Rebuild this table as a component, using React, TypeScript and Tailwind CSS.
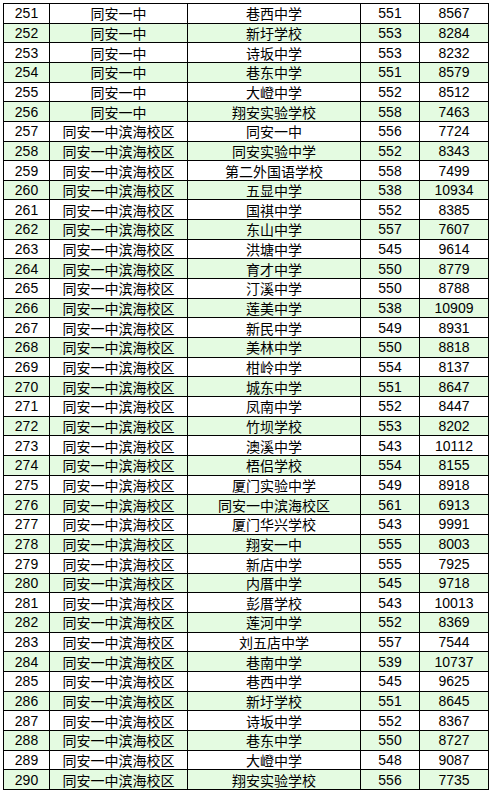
import React from 'react'

const rows: [number, string, string, number, number][] = [
  [251, '同安一中', '巷西中学', 551, 8567],
  [252, '同安一中', '新圩学校', 553, 8284],
  [253, '同安一中', '诗坂中学', 553, 8232],
  [254, '同安一中', '巷东中学', 551, 8579],
  [255, '同安一中', '大嶝中学', 552, 8512],
  [256, '同安一中', '翔安实验学校', 558, 7463],
  [257, '同安一中滨海校区', '同安一中', 556, 7724],
  [258, '同安一中滨海校区', '同安实验中学', 552, 8343],
  [259, '同安一中滨海校区', '第二外国语学校', 558, 7499],
  [260, '同安一中滨海校区', '五显中学', 538, 10934],
  [261, '同安一中滨海校区', '国祺中学', 552, 8385],
  [262, '同安一中滨海校区', '东山中学', 557, 7607],
  [263, '同安一中滨海校区', '洪塘中学', 545, 9614],
  [264, '同安一中滨海校区', '育才中学', 550, 8779],
  [265, '同安一中滨海校区', '汀溪中学', 550, 8788],
  [266, '同安一中滨海校区', '莲美中学', 538, 10909],
  [267, '同安一中滨海校区', '新民中学', 549, 8931],
  [268, '同安一中滨海校区', '美林中学', 550, 8818],
  [269, '同安一中滨海校区', '柑岭中学', 554, 8137],
  [270, '同安一中滨海校区', '城东中学', 551, 8647],
  [271, '同安一中滨海校区', '凤南中学', 552, 8447],
  [272, '同安一中滨海校区', '竹坝学校', 553, 8202],
  [273, '同安一中滨海校区', '澳溪中学', 543, 10112],
  [274, '同安一中滨海校区', '梧侣学校', 554, 8155],
  [275, '同安一中滨海校区', '厦门实验中学', 549, 8918],
  [276, '同安一中滨海校区', '同安一中滨海校区', 561, 6913],
  [277, '同安一中滨海校区', '厦门华兴学校', 543, 9991],
  [278, '同安一中滨海校区', '翔安一中', 555, 8003],
  [279, '同安一中滨海校区', '新店中学', 555, 7925],
  [280, '同安一中滨海校区', '内厝中学', 545, 9718],
  [281, '同安一中滨海校区', '彭厝学校', 543, 10013],
  [282, '同安一中滨海校区', '莲河中学', 552, 8369],
  [283, '同安一中滨海校区', '刘五店中学', 557, 7544],
  [284, '同安一中滨海校区', '巷南中学', 539, 10737],
  [285, '同安一中滨海校区', '巷西中学', 545, 9625],
  [286, '同安一中滨海校区', '新圩学校', 551, 8645],
  [287, '同安一中滨海校区', '诗坂中学', 552, 8367],
  [288, '同安一中滨海校区', '巷东中学', 550, 8727],
  [289, '同安一中滨海校区', '大嶝中学', 548, 9087],
  [290, '同安一中滨海校区', '翔安实验学校', 556, 7735],
]

const num = "font-['Liberation_Sans_Narrow','Liberation_Sans',sans-serif] text-[14px]"
const cjk = "font-['Noto_Sans_CJK_SC',sans-serif] text-[14px]"

export default function App() {
  return (
    <div className="w-[495px] h-[793px] bg-white pt-[3px] pl-[3px]">
      <div className="grid h-[787px] w-[486px] grid-cols-[45px_137px_172px_58px_68px] grid-rows-[repeat(40,minmax(0,1fr))] gap-px border border-black bg-black leading-none text-black">
        {rows.map(([id, school, from, score, rank]) => {
          const bg = id % 2 === 0 ? 'bg-[#e4fbe1]' : 'bg-white'
          return (
            <React.Fragment key={id}>
              <div className={`${bg} ${num} flex items-center justify-center`}>{id}</div>
              <div className={`${bg} ${cjk} flex items-center justify-center`}>{school}</div>
              <div className={`${bg} ${cjk} flex items-center justify-center`}>{from}</div>
              <div className={`${bg} ${num} flex items-center justify-center`}>{score}</div>
              <div className={`${bg} ${num} flex items-center justify-center`}>{rank}</div>
            </React.Fragment>
          )
        })}
      </div>
    </div>
  )
}
